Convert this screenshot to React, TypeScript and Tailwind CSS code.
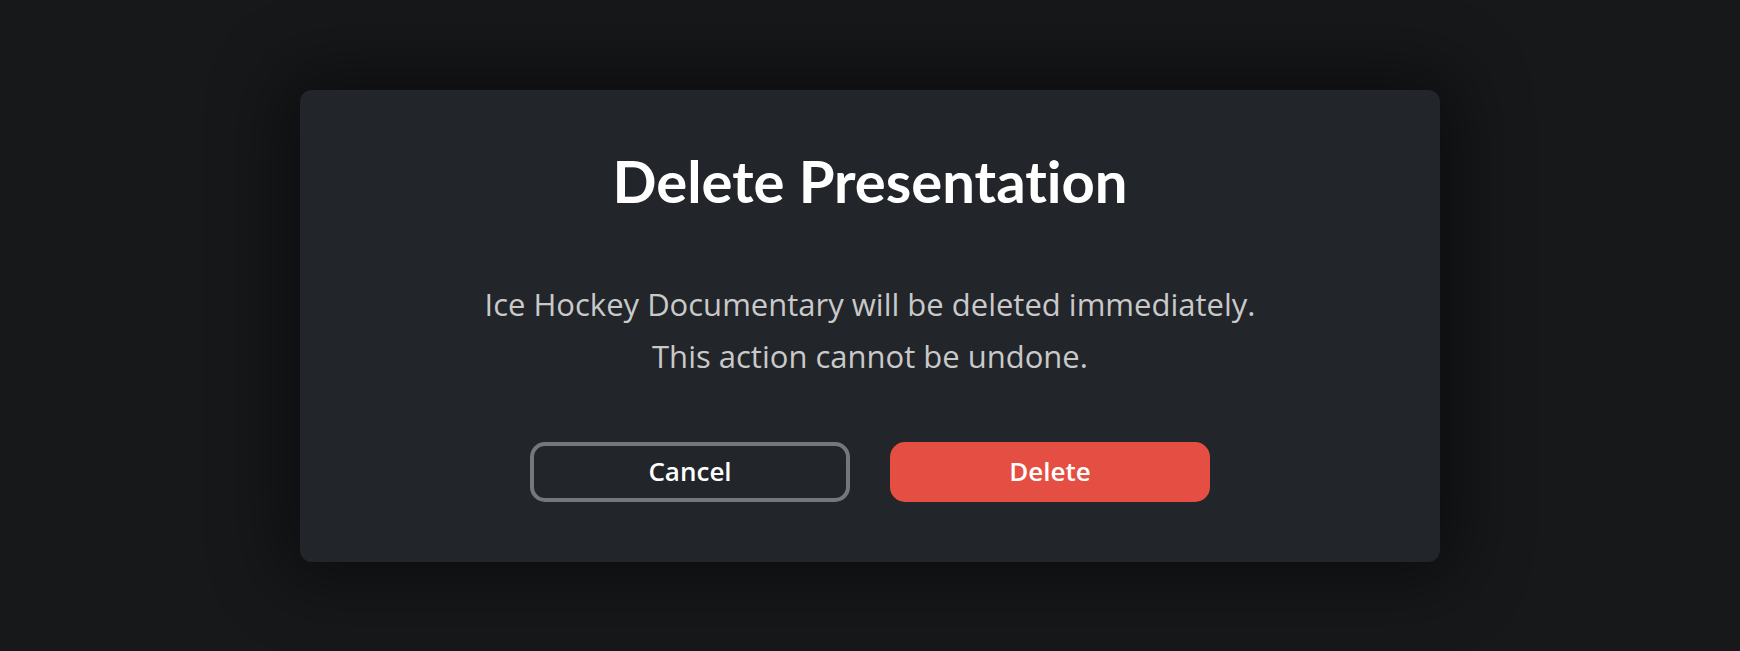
export default function App() {
  return (
    <div className="w-full h-[651px] bg-[#17181a] flex items-center justify-center">
      <div className="w-[1140px] h-[472px] rounded-[12px] bg-[#22252a] shadow-[0_0_70px_20px_rgba(0,0,0,0.45)] flex flex-col items-center pt-[56px]">
        <h1 className="text-[58px] leading-[69px] font-bold text-white [font-variant-ligatures:none]" style={{ fontFamily: "Lato, sans-serif" }}>
          Delete Presentation
        </h1>
        <div className="mt-[63px] text-center text-[31px] leading-[52px] font-normal text-[#c9c9c9]" style={{ fontFamily: '"Open Sans", sans-serif' }}>
          <p>Ice Hockey Documentary will be deleted immediately.</p>
          <p>This action cannot be undone.</p>
        </div>
        <div className="mt-[60px] flex gap-[40px]" style={{ fontFamily: '"Open Sans", sans-serif' }}>
          <button className="w-[320px] h-[60px] rounded-[15px] border-[4px] border-[#75787b] text-white text-[26px] font-semibold flex items-center justify-center">
            Cancel
          </button>
          <button className="w-[320px] h-[60px] rounded-[15px] bg-[#e54e42] text-white text-[26px] font-semibold flex items-center justify-center">
            Delete
          </button>
        </div>
      </div>
    </div>
  );
}
